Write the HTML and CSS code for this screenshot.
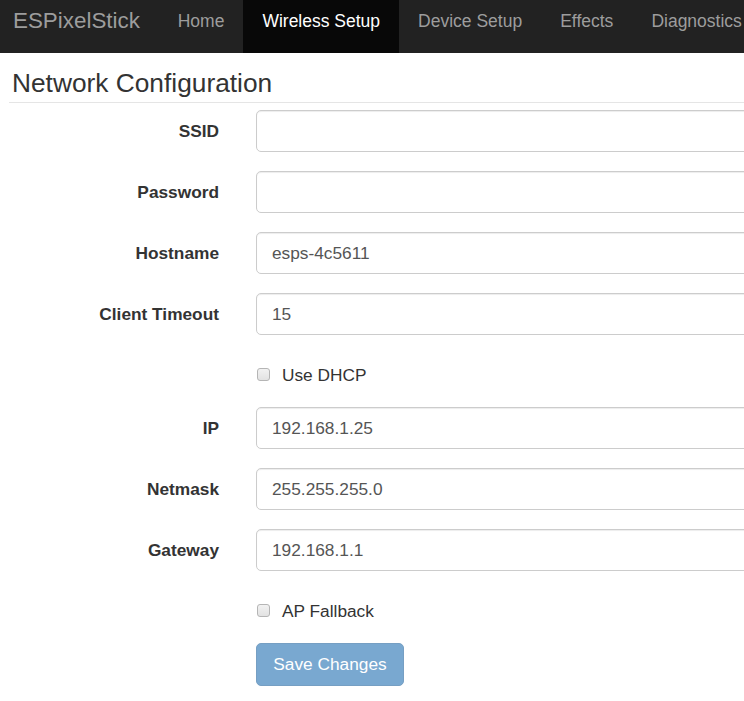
FILE: index.html
```html
<!DOCTYPE html>
<html>
<head>
<meta charset="utf-8">
<title>ESPixelStick</title>
<link rel="stylesheet" href="styles.css">
</head>
<body>
<nav class="navbar">
  <a class="brand" href="#">ESPixelStick</a>
  <ul class="nav">
    <li><a href="#">Home</a></li>
    <li class="active"><a href="#">Wireless Setup</a></li>
    <li><a href="#">Device Setup</a></li>
    <li><a href="#">Effects</a></li>
    <li><a href="#">Diagnostics</a></li>
  </ul>
</nav>
<main class="content">
  <fieldset class="fieldset">
    <legend class="legend">Network Configuration</legend>
    <form class="form">
      <div class="group">
        <label class="label" for="ssid">SSID</label>
        <input class="input" id="ssid" type="text" value="">
      </div>
      <div class="group">
        <label class="label" for="password">Password</label>
        <input class="input" id="password" type="password" value="">
      </div>
      <div class="group">
        <label class="label" for="hostname">Hostname</label>
        <input class="input" id="hostname" type="text" value="esps-4c5611">
      </div>
      <div class="group">
        <label class="label" for="timeout">Client Timeout</label>
        <input class="input" id="timeout" type="text" value="15">
      </div>
      <div class="group check-group">
        <span class="label"></span>
        <label class="check"><input class="checkbox" type="checkbox">Use DHCP</label>
      </div>
      <div class="group">
        <label class="label" for="ip">IP</label>
        <input class="input" id="ip" type="text" value="192.168.1.25">
      </div>
      <div class="group">
        <label class="label" for="netmask">Netmask</label>
        <input class="input" id="netmask" type="text" value="255.255.255.0">
      </div>
      <div class="group">
        <label class="label" for="gateway">Gateway</label>
        <input class="input" id="gateway" type="text" value="192.168.1.1">
      </div>
      <div class="group check-group">
        <span class="label"></span>
        <label class="check"><input class="checkbox" type="checkbox">AP Fallback</label>
      </div>
      <div class="group">
        <span class="label"></span>
        <button class="btn" type="button" disabled>Save Changes</button>
      </div>
    </form>
  </fieldset>
</main>
</body>
</html>
```

FILE: styles.css
```css
html, body {
  margin: 0;
  padding: 0;
  background: #fff;
  overflow: hidden;
}
body {
  font-family: "Liberation Sans", Arial, sans-serif;
  font-size: 17.3px;
  line-height: 24.6px;
  color: #333;
}
.navbar {
  display: flex;
  height: 53px;
  background: #222;
  white-space: nowrap;
  overflow: hidden;
}
.brand {
  display: block;
  padding: 8.5px 18.8px 0 13px;
  font-size: 22.4px;
  line-height: 24.6px;
  color: #9d9d9d;
  text-decoration: none;
}
.nav {
  display: flex;
  margin: 0;
  padding: 0;
  list-style: none;
}
.nav li a {
  display: block;
  height: 53px;
  box-sizing: border-box;
  padding: 8.7px 19px 0;
  font-size: 17.5px;
  line-height: 24.6px;
  color: #9d9d9d;
  text-decoration: none;
}
.nav li:last-child a {
  padding-right: 0;
}
.nav li.active a {
  background: #080808;
  color: #fff;
}
.content {
  width: 830px;
  padding: 12px 0 0 9px;
}
.fieldset {
  margin: 0;
  padding: 0;
  border: 0;
  min-width: 0;
}
.legend {
  display: block;
  width: 100%;
  padding: 0 0 0 3px;
  margin: 0;
  height: 37px;
  box-sizing: content-box;
  font-size: 26.3px;
  line-height: 37px;
  color: #333;
  border-bottom: 1px solid #e5e5e5;
}
.form {
  margin-top: 7px;
}
.group {
  display: flex;
  align-items: center;
  margin-bottom: 19px;
}
.label {
  flex: 0 0 210px;
  box-sizing: border-box;
  text-align: right;
  font-weight: bold;
}
.input {
  flex: 1 1 auto;
  margin-left: 37px;
  height: 42px;
  box-sizing: border-box;
  padding: 7px 15px;
  font-family: "Liberation Sans", Arial, sans-serif;
  font-size: 17.3px;
  color: #555;
  background: #fff;
  border: 1px solid #ccc;
  border-radius: 5px;
  box-shadow: inset 0 1px 1px rgba(0, 0, 0, .075);
  outline: none;
}
.check-group {
  height: 34px;
  align-items: flex-start;
}
.check {
  margin-left: 37px;
  padding-top: 8.6px;
  display: flex;
  align-items: center;
  line-height: 24.6px;
  font-weight: normal;
}
.checkbox {
  appearance: none;
  -webkit-appearance: none;
  width: 13px;
  height: 13px;
  margin: 0 12px 0 1px;
  box-sizing: border-box;
  border: 1px solid #b5b5b5;
  border-radius: 3px;
  background: linear-gradient(#f2f2f2, #e2e2e2);
}
.btn {
  margin-left: 37px;
  width: 148px;
  height: 43px;
  padding: 0;
  font-family: "Liberation Sans", Arial, sans-serif;
  font-size: 17.3px;
  color: #fff;
  background: #337ab7;
  border: 1px solid #2e6da4;
  border-radius: 5px;
  opacity: .65;
}
```
